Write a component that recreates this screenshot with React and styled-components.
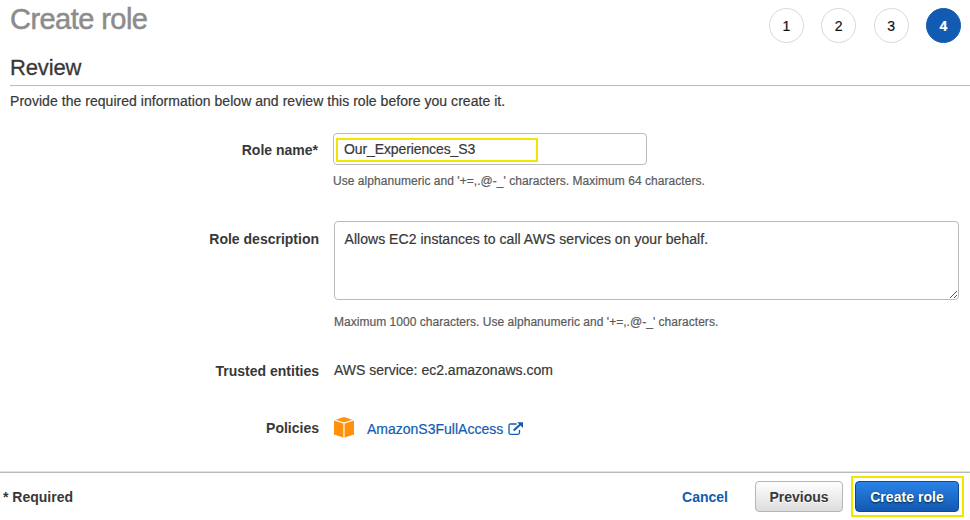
import React from "react";
import styled, { createGlobalStyle, css } from "styled-components";

const GlobalStyle = createGlobalStyle`
  *, *::before, *::after { box-sizing: border-box; }
  body {
    margin: 0;
    background: #fff;
    color: #383838;
    font: 14px/20px "Liberation Sans", Arial, sans-serif;
    -webkit-text-stroke: 0.2px;
  }
`;

const Page = styled.div`
  display: flex;
  flex-direction: column;
  width: 970px;
  height: 520px;
  overflow: hidden;
`;

const Header = styled.header`
  display: flex;
  justify-content: space-between;
  height: 52px;
  padding: 0 9px 0 10px;
`;

const Title = styled.h1`
  margin: 2px 0 0;
  font-size: 29px;
  line-height: 34px;
  font-weight: 400;
  color: #8c8c8c;
  -webkit-text-stroke: 0.5px;
`;

const Steps = styled.ol`
  display: flex;
  gap: 17.4px;
  margin: 8px 0 0;
  padding: 0;
  list-style: none;
`;

const Step = styled.li`
  display: flex;
  align-items: center;
  justify-content: center;
  width: 35px;
  height: 35px;
  border: 1px solid ${(p) => (p.$active ? "#125bb3" : "#d9d9d9")};
  border-radius: 50%;
  background: ${(p) => (p.$active ? "#125bb3" : "#fff")};
  color: ${(p) => (p.$active ? "#fff" : "#111")};
  font-weight: ${(p) => (p.$active ? 700 : 400)};
`;

const SectionTitle = styled.h2`
  height: 34px;
  margin: 0 0 0 10px;
  border-bottom: 1px solid #bbb;
  font-size: 22px;
  line-height: 31px;
  font-weight: 400;
  -webkit-text-stroke: 0.3px;
`;

const Text = styled.span`
  letter-spacing: ${(p) => p.$tracking || 0}px;
`;

const Intro = styled.p`
  margin: 5px 0 22px 10px;
`;

const Row = styled.div`
  display: grid;
  grid-template-columns: 319px 1fr;
  column-gap: 14px;
  height: ${(p) => p.$height}px;
  padding-right: 11px;
`;

const Label = styled.label`
  padding-top: ${(p) => p.$top}px;
  padding-right: ${(p) => p.$right || 0}px;
  text-align: right;
  font-weight: 700;
  -webkit-text-stroke: 0;
`;

const Field = styled.div`
  padding-left: ${(p) => p.$left || 0}px;
`;

const FieldBox = styled.div`
  position: relative;
  width: ${(p) => p.$width}px;
  height: ${(p) => p.$height}px;
`;

const control = css`
  display: block;
  width: 100%;
  height: 100%;
  margin: 0;
  border: 1px solid #bbb;
  border-radius: 4px;
  background: #fff;
  color: #383838;
  font: inherit;
  letter-spacing: ${(p) => p.$tracking || 0}px;
  outline: none;
`;

const Input = styled.input`
  ${control}
  padding: 0 10px;
`;

const TextArea = styled.textarea`
  ${control}
  padding: 7px 9.5px;
  resize: none;
  overflow: hidden;
`;

const FieldMarker = styled.span`
  position: absolute;
  top: 5px;
  left: 3px;
  width: 202px;
  height: 24px;
  border: 2px solid #f2e600;
  pointer-events: none;
`;

const Grip = styled.svg`
  position: absolute;
  right: 1px;
  bottom: 1px;
`;

const Hint = styled.div`
  margin-top: ${(p) => p.$gap}px;
  font-size: 12px;
  line-height: 16px;
  color: #5a5a5a;
  letter-spacing: ${(p) => p.$tracking || 0}px;
`;

const Policy = styled.div`
  display: flex;
  align-items: flex-start;
`;

const PolicyLink = styled.a`
  display: flex;
  margin: 2px 0 0 13px;
  color: #125bb3;
  text-decoration: none;

  svg { margin: 3px 0 0 5px; }
`;

const Footer = styled.footer`
  display: flex;
  align-items: flex-start;
  height: 49px;
  margin-top: auto;
  padding: 3px 6px 0 3px;
  border-top: 1px solid #e2e2e2;
  box-shadow: inset 0 1px #bababa;
  -webkit-text-stroke: 0;
`;

const Required = styled.strong`
  flex: 1;
  padding-top: 12px;
`;

const Cancel = styled.a`
  margin: 12px 27px 0 0;
  color: #125bb3;
  font-weight: 700;
  text-decoration: none;
`;

const Button = styled.button`
  width: ${(p) => p.$width}px;
  height: 31px;
  padding: 0;
  border: 1px solid ${(p) => (p.$primary ? "#0c4a94" : "#b5b5b5")};
  border-radius: 4px;
  background: ${(p) =>
    p.$primary ? "linear-gradient(#2a83e6, #1259b2)" : "linear-gradient(#fff, #dcdcdc)"};
  color: ${(p) => (p.$primary ? "#fff" : "#383838")};
  text-shadow: ${(p) => (p.$primary ? "0 1px 2px rgba(0, 0, 0, .7)" : "0 1px #fff")};
  font: inherit;
  font-weight: 700;
`;

const PreviousSlot = styled.div`
  padding-top: 6px;
`;

const PrimaryMarker = styled.div`
  width: 113px;
  height: 41px;
  margin: 1px 0 0 8px;
  padding: 3px 0 0 2px;
  border: 2px solid #f2e600;
`;

const BucketIcon = () => (
  <svg width="20" height="21" viewBox="0 0 20 21" fill="#ff920a">
    <path d="M10 0 18.4 2.7 10 5.5 1.6 2.7Z" />
    <path d="M0 3.6 9.4 6.6V20.4L0 17.6Z" />
    <path d="M20 3.6 10.6 6.6V20.4L20 17.6Z" />
  </svg>
);

const ExternalIcon = () => (
  <svg width="16" height="14" viewBox="0 0 16 14" fill="none" stroke="#125bb3">
    <path d="M8.6 2H2.4Q1 2 1 3.4V10.8Q1 12.3 2.4 12.3H10Q11.5 12.3 11.5 10.8V8" strokeWidth="1.3" />
    <path d="M5.7 8.5 12.2 2.4" strokeWidth="2" />
    <path d="M9.2.2H15V6Z" fill="#125bb3" stroke="none" />
  </svg>
);

export default function App() {
  return (
    <>
      <GlobalStyle />
      <Page>
        <Header>
          <Title><Text $tracking={-0.55}>Create role</Text></Title>
          <Steps>
            {[1, 2, 3, 4].map((n) => (
              <Step key={n} $active={n === 4}>{n}</Step>
            ))}
          </Steps>
        </Header>
        <SectionTitle><Text $tracking={-0.15}>Review</Text></SectionTitle>
        <Intro>
          <Text $tracking={0.042}>
            Provide the required information below and review this role before you create it.
          </Text>
        </Intro>

        <Row $height={88}>
          <Label $top={7} $right={1} htmlFor="role-name"><Text>Role name*</Text></Label>
          <Field>
            <FieldBox $width={314} $height={32}>
              <Input id="role-name" $tracking={-0.11} defaultValue="Our_Experiences_S3" />
              <FieldMarker />
            </FieldBox>
            <Hint $gap={8} $tracking={0.045}>
              Use alphanumeric and '+=,.@-_' characters. Maximum 64 characters.
            </Hint>
          </Field>
        </Row>

        <Row $height={139}>
          <Label $top={8} htmlFor="role-description"><Text>Role description</Text></Label>
          <Field $left={1}>
            <FieldBox $width={625} $height={79}>
              <TextArea
                id="role-description"
                $tracking={0.04}
                defaultValue="Allows EC2 instances to call AWS services on your behalf."
              />
              <Grip width="9" height="9" viewBox="0 0 9 9" stroke="#444" strokeWidth=".9">
                <path d="M1 8 8 1M5 8 8 5" />
              </Grip>
            </FieldBox>
            <Hint $gap={14} $tracking={0.03}>
              Maximum 1000 characters. Use alphanumeric and '+=,.@-_' characters.
            </Hint>
          </Field>
        </Row>

        <Row $height={57}>
          <Label as="div" $top={1}><Text>Trusted entities</Text></Label>
          <Field $left={1}><Text>AWS service: ec2.amazonaws.com</Text></Field>
        </Row>

        <Row $height={40}>
          <Label as="div" $top={1}><Text>Policies</Text></Label>
          <Field $left={1}>
            <Policy>
              <BucketIcon />
              <PolicyLink href="#"><Text>AmazonS3FullAccess</Text><ExternalIcon /></PolicyLink>
            </Policy>
          </Field>
        </Row>

        <Footer>
          <Required><Text>* Required</Text></Required>
          <Cancel href="#"><Text>Cancel</Text></Cancel>
          <PreviousSlot><Button $width={88}><Text>Previous</Text></Button></PreviousSlot>
          <PrimaryMarker>
            <Button $primary $width={104}><Text $tracking={0.05}>Create role</Text></Button>
          </PrimaryMarker>
        </Footer>
      </Page>
    </>
  );
}
